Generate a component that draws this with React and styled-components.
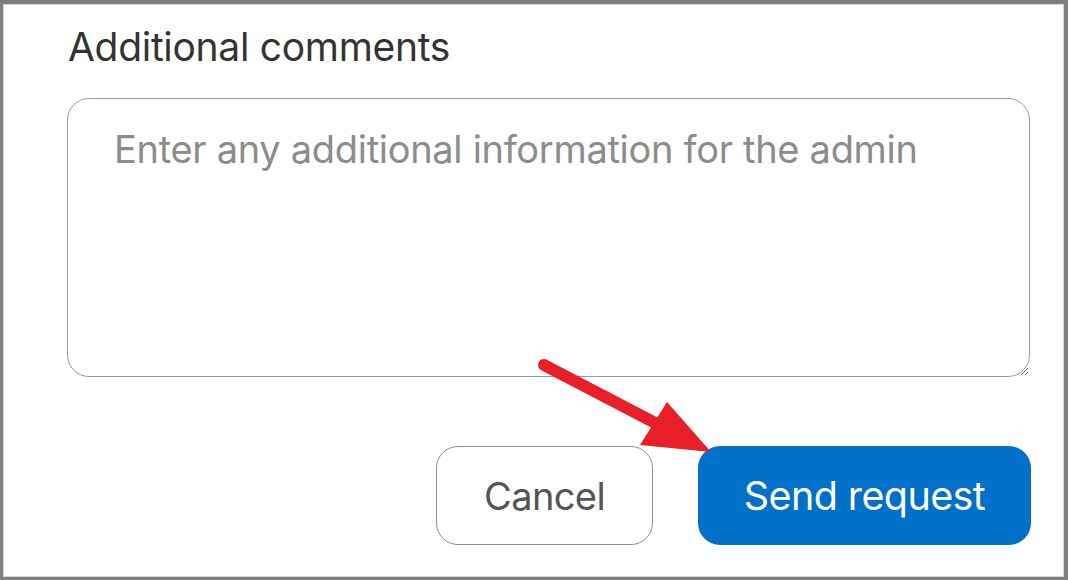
import React from "react";
import styled, { createGlobalStyle } from "styled-components";

const Global = createGlobalStyle`
  html, body { margin: 0; padding: 0; background: #fff; }
  body { font-family: Inter, "Noto Sans", "Liberation Sans", sans-serif; }
  * { box-sizing: border-box; }
`;

const Frame = styled.div`
  position: relative;
  width: 1068px;
  height: 580px;
  border-style: solid;
  border-color: #7f7f7f;
  border-width: 4px 4px 3px 3px;
  box-shadow: inset 0 0 0 1px #d6d6d6;
  padding: 20px 34px 0 64px;
  display: flex;
  flex-direction: column;
`;

const Label = styled.label`
  font-size: 39px;
  line-height: 46px;
  color: #333;
  font-weight: 400;
  letter-spacing: -0.3px;
  padding-left: 1px;
`;

const Area = styled.textarea`
  margin-top: 28px;
  width: 963px;
  height: 279px;
  border: 1.5px solid #999;
  border-radius: 22px;
  padding: 27px 46px;
  font-family: inherit;
  font-size: 38px;
  letter-spacing: -0.3px;
  color: #333;
  outline: none;
  &::placeholder { color: #8c8c8c; }
`;

const Actions = styled.div`
  margin-top: 69px;
  width: 964px;
  display: flex;
  justify-content: flex-end;
  gap: 45px;
`;

const Button = styled.button`
  height: 99px;
  width: ${(p) => p.$w}px;
  border-radius: 22px;
  font-family: inherit;
  font-size: ${(p) => (p.$primary ? 39.5 : 38)}px;
  letter-spacing: -0.6px;
  cursor: pointer;
  padding: 0;
  border: ${(p) => (p.$primary ? "none" : "1.5px solid #8e8e8e")};
  background: ${(p) => (p.$primary ? "#0070c8" : "#fff")};
  color: ${(p) => (p.$primary ? "#fff" : "#555")};
`;

const Arrow = styled.svg`
  position: absolute;
  left: 0;
  top: 0;
  pointer-events: none;
`;

export default function App() {
  return (
    <>
      <Global />
      <Frame>
        <Label>Additional comments</Label>
        <Area placeholder="Enter any additional information for the admin" />
        <Actions>
          <Button $w={217}>Cancel</Button>
          <Button $w={333} $primary>Send request</Button>
        </Actions>
        <Arrow width="1068" height="580" viewBox="0 0 1068 580">
          <line x1="541" y1="361" x2="660" y2="423" stroke="#e81f29" strokeWidth="12" strokeLinecap="round" />
          <polygon points="637,441 664,398 708,448" fill="#e81f29" />
        </Arrow>
      </Frame>
    </>
  );
}
